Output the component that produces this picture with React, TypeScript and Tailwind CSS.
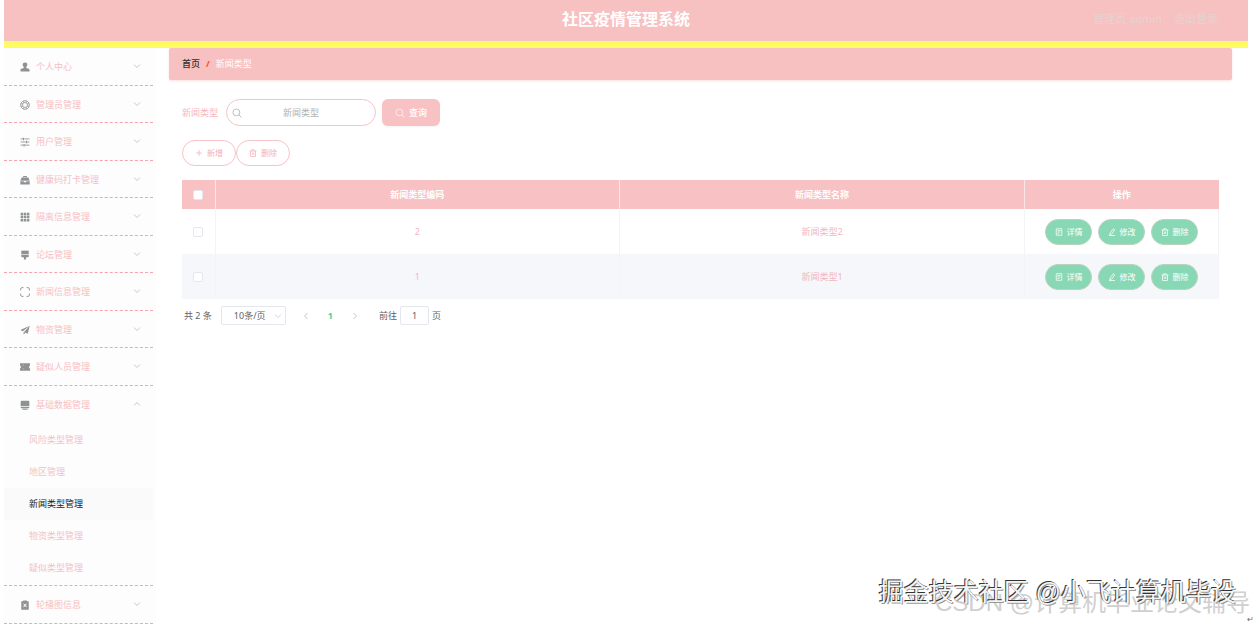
import type { ReactNode } from "react";

const solidIcons: Record<string, ReactNode> = {
  user: (
    <>
      <circle cx="8" cy="4.4" r="3.8" />
      <path d="M6 7h4v2.400l4 1.400c.8.3 1.200 1 1.200 2V15H.8v-2.200c0-1 .4-1.700 1.200-2l4-1.400z" />
    </>
  ),
  ring: (
    <g fill="none" stroke="currentColor" strokeWidth="1.2">
      <circle cx="8" cy="8" r="7" />
      <circle cx="8" cy="8" r="4" />
      <path d="M6 1.4v3M10 1.4v3M6 11.6v3M10 11.6v3M1.4 6h3M1.4 10h3M11.6 6h3M11.6 10h3" />
    </g>
  ),
  sliders: (
    <g fill="none" stroke="currentColor" strokeWidth="1.4">
      <path d="M1 3h3M7 3h8M1 8h8M12 8h3M1 13h4M8 13h7" />
      <path d="M5.5 1v4M10.5 6v4M6.5 11v4" strokeWidth="2" />
    </g>
  ),
  toolbox: (
    <>
      <path d="M5 4V1.5h6V4h-1.5V3h-3v1z" />
      <path d="M2.5 4h11L15.5 9H.5z" />
      <path d="M.5 10H6v1.5h4V10h5.5v5H.5z" />
    </>
  ),
  grid: (
    <path d="M1 1h4v4H1zM6 1h4v4H6zM11 1h4v4h-4zM1 6h4v4H1zM6 6h4v4H6zM11 6h4v4h-4zM1 11h4v4H1zM6 11h4v4H6zM11 11h4v4h-4z" />
  ),
  brush: (
    <>
      <path d="M2 1h12v6H2z" />
      <path d="M2 8h12v2c0 1-1 1.6-2 1.6h-2L9.500 15h-3L6 11.600H4c-1 0-2-.6-2-1.600z" />
    </>
  ),
  frame: (
    <path
      d="M1 5.500V3c0-1 1-2 2-2h2.500M10.500 1H13c1 0 2 1 2 2v2.500M15 10.500V13c0 1-1 2-2 2h-2.500M5.500 15H3c-1 0-2-1-2-2v-2.500"
      fill="none"
      stroke="currentColor"
      strokeWidth="1.500"
    />
  ),
  plane: <path d="M15.500 1L.5 8l4 2zM15.500 1l-9 10 6 3zM5.500 11l3 1.500-2.500 3z" />,
  ticket: (
    <path d="M0 2h16v3.500c-2 .5-2 4.500 0 5V14H0v-3.500c2-.5 2-4.500 0-5zM4.500 4.500v1h1v-1zM4.500 10.500v1h1v-1z" fillRule="evenodd" />
  ),
  monitor: (
    <>
      <path d="M3 1h10c1.200 0 2 .8 2 2v7H1V3c0-1.200.8-2 2-2z" />
      <path d="M1 11h14c0 1.200-.8 2-2 2H3c-1.200 0-2-.8-2-2zM4 14h8v1.500H4z" />
    </>
  ),
  clipboard: (
    <path
      d="M2 2h3V.8h6V2h3v13.500H2zM5.200 6.500L7 8.500l-1.800 2 1 1L8 9.600l1.800 1.900 1-1L9 8.500l1.800-2-1-1L8 7.400 6.200 5.500z"
      fillRule="evenodd"
    />
  ),
};

const lineIcons: Record<string, ReactNode> = {
  search: (
    <>
      <circle cx="7" cy="7" r="5.500" />
      <path d="M11 11l4 4" />
    </>
  ),
  plus: <path d="M8 2v12M2 8h12" />,
  trash: <path d="M1 4h14M5.500 4V1.500h5V4M3 4v11h10V4M6.500 7v5M9.500 7v5" />,
  doc: <path d="M2.500 1.500h11v13h-11zM5 5h6M5 8h6M5 11h3" />,
  edit: <path d="M10.500 1.500l3 2-6.500 9-3.500 1.500.5-3.500zM2 15h12" />,
  down: <path d="M2 5l6 6 6-6" />,
  up: <path d="M2 11l6-6 6 6" />,
  left: <path d="M11 2L5 8l6 6" />,
  right: <path d="M5 2l6 6-6 6" />,
};

function Solid({ name }: { name: string }) {
  return (
    <svg viewBox="0 0 16 16" className="size-2.5 shrink-0 text-[#8f9294]" fill="currentColor" aria-hidden="true">
      {solidIcons[name]}
    </svg>
  );
}

function Line({ name, className = "size-2" }: { name: string; className?: string }) {
  return (
    <svg viewBox="0 0 16 16" className={className} fill="none" stroke="currentColor" strokeWidth="1.500" aria-hidden="true">
      {lineIcons[name]}
    </svg>
  );
}

const menu = [
  { icon: "user", label: "个人中心" },
  { icon: "ring", label: "管理员管理" },
  { icon: "sliders", label: "用户管理" },
  { icon: "toolbox", label: "健康码打卡管理" },
  { icon: "grid", label: "隔离信息管理" },
  { icon: "brush", label: "论坛管理" },
  { icon: "frame", label: "新闻信息管理" },
  { icon: "plane", label: "物资管理" },
  { icon: "ticket", label: "疑似人员管理" },
  {
    icon: "monitor",
    label: "基础数据管理",
    children: ["风险类型管理", "地区管理", "新闻类型管理", "物资类型管理", "疑似类型管理"],
  },
  { icon: "clipboard", label: "轮播图信息" },
];

const rows = [
  { id: 2, name: "新闻类型2" },
  { id: 1, name: "新闻类型1" },
];

const actions = [
  { icon: "doc", label: "详情" },
  { icon: "edit", label: "修改" },
  { icon: "trash", label: "删除" },
];

function Sidebar() {
  return (
    <nav className="w-[152px] shrink-0 bg-[#fdfdfd] pr-[3px]">
      <ul>
        {menu.map((item) => (
          <li
            key={item.label}
            className={
              item.children
                ? "border-b border-dashed border-[#f7a3b0] pb-px"
                : "border-b border-dashed border-[#f7a3b0] odd:h-[38px] even:h-[37px]"
            }
          >
            <button className="flex h-[38px] w-full items-center gap-1.5 pr-3 pl-4 text-[#f6bfc5]">
              <Solid name={item.icon} />
              <span className="flex-1 text-left">{item.label}</span>
              <Line name={item.children ? "up" : "down"} className="mb-0.5 size-2 text-[#b4b6ba]" />
            </button>
            {item.children && (
              <ul>
                {item.children.map((child) => (
                  <li key={child}>
                    <a
                      href="#"
                      className={
                        child === "新闻类型管理"
                          ? "flex h-8 items-center bg-[#fafafa] pl-[25px] text-[#222]"
                          : "flex h-8 items-center pl-[25px] text-[#f6bfc5]"
                      }
                    >
                      {child}
                    </a>
                  </li>
                ))}
              </ul>
            )}
          </li>
        ))}
      </ul>
    </nav>
  );
}

const checkbox = "block size-2.5 appearance-none rounded-xs border border-[#e4e7ed] bg-white mx-auto";
const outlineButton =
  "flex h-[26px] w-[54px] items-center justify-center gap-1 rounded-full border border-[#f8c3c7] bg-white text-[8px] text-[#f4b0b8]";

function DataTable() {
  return (
    <table className="mt-3.5 w-full table-fixed border-collapse text-center">
      <colgroup>
        <col className="w-[33px]" />
        <col />
        <col />
        <col className="w-[194px]" />
      </colgroup>
      <thead className="bg-[#f8c1c3] text-white">
        <tr className="h-[29px]">
          <th className="border-r border-[#fbe6e7]">
            <input type="checkbox" aria-label="全选" className={checkbox} />
          </th>
          <th className="border-r border-[#fbe6e7] font-bold">新闻类型编码</th>
          <th className="border-r border-[#fbe6e7] font-bold">新闻类型名称</th>
          <th className="font-bold">操作</th>
        </tr>
      </thead>
      <tbody className="text-[#f3b6c0]">
        {rows.map((row) => (
          <tr key={row.id} className="h-[45px] border-r border-[#f2f4f8] even:bg-[#f5f7fa]">
            <td className="border-r border-[#f2f4f8]">
              <input type="checkbox" aria-label={row.name} className={checkbox} />
            </td>
            <td className="border-r border-[#f2f4f8]">{row.id}</td>
            <td className="border-r border-[#f2f4f8]">{row.name}</td>
            <td>
              <div className="flex justify-center gap-1.5">
                {actions.map((action) => (
                  <button
                    key={action.label}
                    className="flex h-[26px] w-[47px] items-center justify-center gap-1 rounded-full border border-[#b9d3bd] bg-[#88d8b5] text-[8px] text-white"
                  >
                    <Line name={action.icon} />
                    {action.label}
                  </button>
                ))}
              </div>
            </td>
          </tr>
        ))}
      </tbody>
    </table>
  );
}

function Pagination() {
  return (
    <div className="mt-[7px] flex items-center pl-0.5 text-[#606266]">
      <span>共 2 条</span>
      <div className="relative ml-[9px] h-[19px] w-[65px]">
        <select
          aria-label="每页条数"
          className="size-full appearance-none rounded-xs border border-[#e4e7ed] bg-white pl-3 text-[9px]"
        >
          <option>10条/页</option>
        </select>
        <Line name="down" className="pointer-events-none absolute top-1.5 right-1 size-2 text-[#c0c4cc]" />
      </div>
      <button aria-label="上一页" className="ml-4 text-[#b0b3b8]">
        <Line name="left" />
      </button>
      <button className="mx-[18px] font-bold text-[#3fcf9b]">1</button>
      <button aria-label="下一页" className="text-[#b0b3b8]">
        <Line name="right" />
      </button>
      <label className="ml-5 flex items-center gap-[3px]">
        前往
        <input
          type="text"
          defaultValue="1"
          className="h-[19px] w-[29px] rounded-xs border border-[#e4e7ed] bg-white text-center"
        />
        页
      </label>
    </div>
  );
}

export default function App() {
  return (
    <div className="relative min-h-screen overflow-hidden bg-white pr-1.5 pl-1 font-['Noto_Sans','Noto_Sans_CJK_SC',sans-serif] text-[9px] leading-3">
      <header className="grid h-12 grid-cols-3 items-center border-b-[7px] border-[#fffb62] bg-[#f7c1c1] pb-1">
        <h1 className="col-start-2 text-center text-base leading-6 font-bold text-white">社区疫情管理系统</h1>
        <div className="flex justify-end gap-3 pr-[30px] text-[11px] text-[#e6d2d0]">
          <span>管理员 admin</span>
          <a href="#">退出登录</a>
        </div>
      </header>
      <div className="flex">
        <Sidebar />
        <main className="min-w-0 flex-1 pr-4 pl-[13px]">
          <nav className="flex h-8 items-center gap-1.5 rounded-xs bg-[#f7c0c1] px-[13px] text-white shadow-sm shadow-[#f7c1c1]/40">
            <a href="#" className="font-medium text-[#303133]">
              首页
            </a>
            <span className="font-bold text-[#f4502c]">/</span>
            <span>新闻类型</span>
          </nav>
          <div className="px-[13px] pt-[19px]">
            <form className="flex items-center" onSubmit={(e) => e.preventDefault()}>
              <label htmlFor="type" className="text-[#f6b6be]">
                新闻类型
              </label>
              <div className="relative ml-2 h-[27px] w-[150px]">
                <input
                  id="type"
                  type="text"
                  placeholder="新闻类型"
                  className="size-full rounded-full border border-[#f8c3c7] bg-white px-5 text-center placeholder:text-[#b0b2b6]"
                />
                <Line name="search" className="absolute top-[9px] left-1.5 size-2.5 text-[#b8babf]" />
              </div>
              <button className="ml-1.5 flex h-[27px] w-[58px] items-center justify-center gap-1 rounded-md bg-[#f8c1c3] font-medium text-white shadow-xs">
                <Line name="search" className="size-2.5 opacity-70" />
                查询
              </button>
            </form>
            <div className="mt-3.5 flex">
              <button className={outlineButton}>
                <Line name="plus" />
                新增
              </button>
              <button className={outlineButton}>
                <Line name="trash" />
                删除
              </button>
            </div>
            <DataTable />
            <Pagination />
          </div>
        </main>
      </div>
      <div className="pointer-events-none absolute right-1 bottom-1.5 font-['Liberation_Sans','Noto_Sans_CJK_SC',sans-serif] text-2xl leading-8 whitespace-nowrap text-[#d0d0d0]">
        CSDN @计算机毕业论文辅导
      </div>
      <div className="pointer-events-none absolute right-[18px] bottom-[17px] font-['Liberation_Sans','Noto_Sans_CJK_SC',sans-serif] text-[25px] leading-8 whitespace-nowrap text-[#f4f4f4] [text-shadow:-1px_-1px_0_#333,1px_1px_0_#999]">
        掘金技术社区 @小飞计算机毕设
      </div>
      <span className="pointer-events-none absolute right-0 bottom-0 text-[8px] leading-3 text-[#666]">↵</span>
    </div>
  );
}
